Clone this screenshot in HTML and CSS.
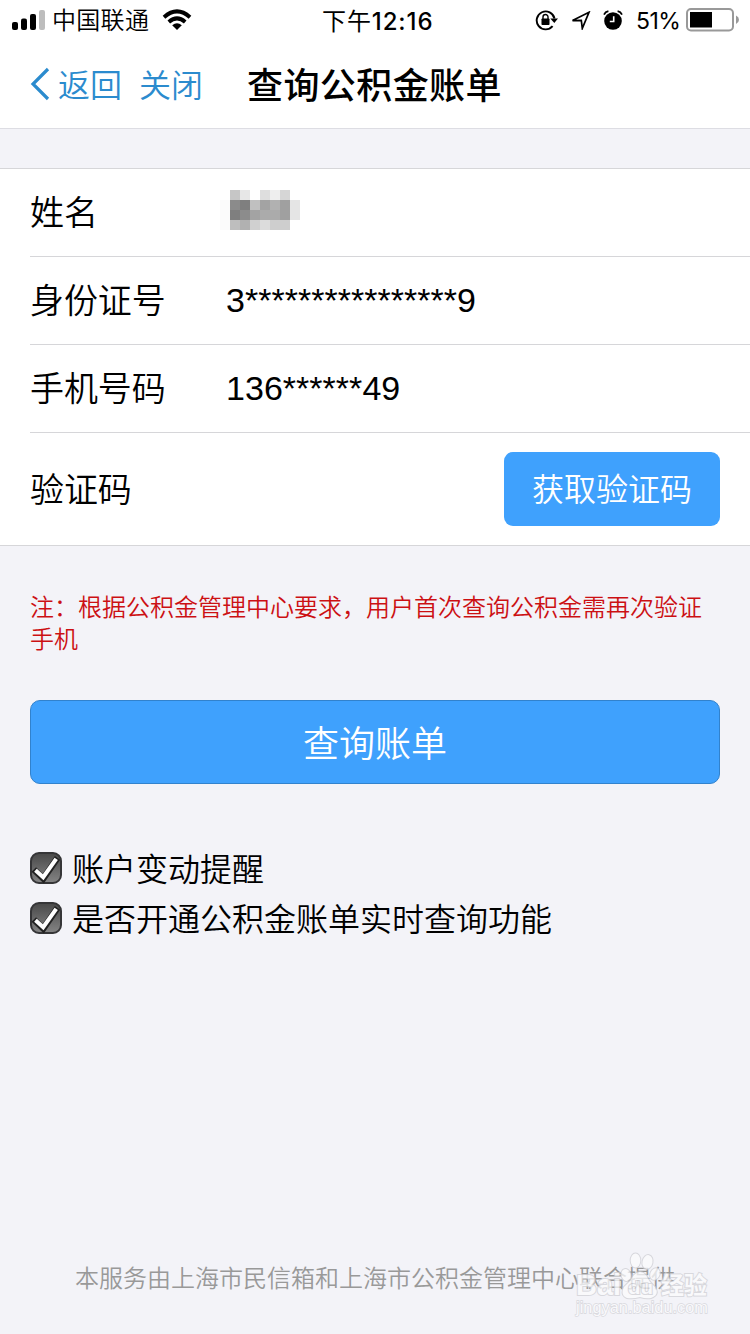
FILE: index.html
```
<!DOCTYPE html>
<html lang="zh-CN">
<head>
<meta charset="utf-8">
<title>查询公积金账单</title>
<link rel="stylesheet" href="styles.css">
</head>
<body>
<div class="page">
  <header class="status">
    <div class="status-left">
      <svg class="signal" width="34" height="22" viewBox="0 0 34 22"><rect x="0" y="13" width="6" height="8" rx="2"/><rect x="9" y="9.500" width="6" height="11.500" rx="2"/><rect x="18" y="5" width="6" height="16" rx="2"/><rect x="27" y="1" width="6" height="20" rx="2" fill="#bdbdbd"/></svg>
      <span class="carrier">中国联通</span>
      <svg class="wifi" width="30" height="22" viewBox="0 0 30 22"><path d="M2 8.200Q15-3.400 28 8.200M6.800 13Q15 5.800 23.200 13" fill="none" stroke="#000" stroke-width="3.900"/><path d="M10.200 16.200Q15 12.400 19.800 16.200L15 21Z"/></svg>
    </div>
    <div class="clock"><span class="clock-cn">下午</span>12:16</div>
    <div class="status-right">
      <svg class="lock" width="24" height="22" viewBox="0 0 24 22"><path d="M17.600 17.200A9 9 0 1 1 19.500 9.500" fill="none" stroke="#000" stroke-width="1.900"/><path d="M15.300 9.500H23L19.300 14Z"/><rect x="6.500" y="9.500" width="8" height="6.500" rx=".8"/><path d="M8 10V8a2.500 2.500 0 0 1 5 0v2" fill="none" stroke="#000" stroke-width="1.400"/></svg>
      <svg class="arrow" width="20" height="19" viewBox="0 0 20 19"><path d="M1.500 9.600L18 1.300L11.300 17.400L10.300 9.300Z" fill="none" stroke="#000" stroke-width="1.700" stroke-linejoin="miter"/></svg>
      <svg class="alarm" width="20" height="20" viewBox="0 0 20 20"><circle cx="10" cy="11" r="8.800"/><path d="M1 4.600Q2.300 1.800 5.400 1.200M14.600 1.200Q17.700 1.800 19 4.600" fill="none" stroke="#000" stroke-width="1.800"/><path d="M10.700 6.200V11.500H6.800" fill="none" stroke="#fff" stroke-width="1.600"/></svg>
      <span class="percent">51%</span>
      <svg class="battery" width="54" height="24" viewBox="0 0 54 24"><rect x="1" y="1" width="46" height="21.500" rx="4" fill="#fff" stroke="#999" stroke-width="2"/><rect x="4" y="4" width="22" height="15.500"/><path d="M50 7.500Q53 9 53 11.800T50 16Z" fill="#999"/></svg>
    </div>
  </header>
  <nav class="nav">
    <svg class="back" width="20" height="34" viewBox="0 0 20 34"><path d="M18 2L3 17L18 32" fill="none" stroke="#2b8bce" stroke-width="3.200"/></svg>
    <a class="nav-link">返回</a>
    <a class="nav-link close">关闭</a>
    <h1 class="title">查询公积金账单</h1>
  </nav>
  <section class="form">
    <div class="row"><span class="label">姓名</span>
      <svg class="mosaic" width="80" height="40" viewBox="0 0 8 4" shape-rendering="crispEdges"><path fill="#fbfbfb" d="M0 1h1v3H0z"/><path fill="#c6c6c6" d="M1 0h1v1H1z"/><path fill="#e7e7e7" d="M2 0h1v1H2z"/><path fill="#dedede" d="M4 0h1v1H4z"/><path fill="#eee" d="M5 0h1v1H5z"/><path fill="#d6d6d6" d="M6 0h1v1H6z"/><path fill="#8b8b8b" d="M1 1h1v1H1z"/><path fill="#7f7f7f" d="M2 1h1v1H2zM1 2h1v1H1z"/><path fill="#c0c0c0" d="M3 1h1v1H3z"/><path fill="#a3a3a3" d="M4 1h1v1H4zM3 2h1v1H3z"/><path fill="#b1b1b1" d="M5 1h1v1H5zM2 3h1v1H2z"/><path fill="#a0a0a0" d="M6 1h1v2H6z"/><path fill="#e5e5e5" d="M7 1h1v2H7z"/><path fill="#8c8c8c" d="M2 2h1v1H2z"/><path fill="#ababab" d="M4 2h2v1H4z"/><path fill="#bebebe" d="M1 3h1v1H1z"/><path fill="#d0d0d0" d="M3 3h1v1H3z"/><path fill="#dcdcdc" d="M4 3h1v1H4z"/><path fill="#cecece" d="M5 3h2v1H5z"/></svg>
    </div>
    <div class="row"><span class="label">身份证号</span><span class="value">3****************9</span></div>
    <div class="row"><span class="label">手机号码</span><span class="value">136******49</span></div>
    <div class="row code"><span class="label">验证码</span><button class="get-code">获取验证码</button></div>
  </section>
  <p class="note">注：根据公积金管理中心要求，用户首次查询公积金需再次验证手机</p>
  <button class="submit">查询账单</button>
  <div class="options">
    <div class="option"><svg class="check" width="32" height="32" viewBox="0 0 32 32"><defs><linearGradient id="box" x2="0" y2="1"><stop stop-color="#484848"/><stop offset="1" stop-color="#858585"/></linearGradient></defs><rect x="1" y="1" width="30" height="30" rx="8" fill="url(#box)" stroke="#353537" stroke-width="2"/><path d="M3.800 17.500L13.300 26.500L27.500 5.800" fill="none" stroke="#222" stroke-width="6.500"/><path d="M5.500 18.200L13.200 25.200L26.200 6.800" fill="none" stroke="#fff" stroke-width="4"/></svg><span>账户变动提醒</span></div>
    <div class="option"><svg class="check" width="32" height="32" viewBox="0 0 32 32"><rect x="1" y="1" width="30" height="30" rx="8" fill="url(#box)" stroke="#353537" stroke-width="2"/><path d="M3.800 17.500L13.300 26.500L27.500 5.800" fill="none" stroke="#222" stroke-width="6.500"/><path d="M5.500 18.200L13.200 25.200L26.200 6.800" fill="none" stroke="#fff" stroke-width="4"/></svg><span>是否开通公积金账单实时查询功能</span></div>
  </div>
  <footer class="footer">本服务由上海市民信箱和上海市公积金管理中心联合提供</footer>
  <svg class="watermark" width="150" height="70" viewBox="0 0 150 70">
    <g class="mark">
      <text x="6" y="47" font-size="29" textLength="45" lengthAdjust="spacingAndGlyphs">Bai</text>
      <text x="91" y="46" font-size="24" textLength="46" lengthAdjust="spacingAndGlyphs">经验</text>
      <ellipse cx="56" cy="27" rx="4.500" ry="6" transform="rotate(-15 56 27)"/><ellipse cx="65.500" cy="12.500" rx="4.800" ry="7"/><ellipse cx="77.500" cy="14" rx="5" ry="7" transform="rotate(12 77.500 14)"/><ellipse cx="85" cy="26" rx="4.500" ry="6" transform="rotate(25 85 26)"/>
      <path d="M54 39Q60 34 64 27Q70 21 76 27Q79 34 85 39Q90 47 81 50Q76 51 70 49Q63 51 57 50Q50 47 54 39Z"/>
      <text x="58" y="46" font-size="19" textLength="25" lengthAdjust="spacingAndGlyphs">du</text>
    </g>
    <text class="site" x="6" y="65" font-size="17" textLength="132" lengthAdjust="spacingAndGlyphs">jingyan.baidu.com</text>
  </svg>
</div>
</body>
</html>
```
FILE: styles.css
```
* { box-sizing: border-box; }
body { margin: 0; background: #f3f3f8; color: #000; font-family: "Liberation Sans", "Noto Sans CJK SC", sans-serif; }
.page { position: relative; width: 750px; height: 1334px; overflow: hidden; background: #f3f3f8; display: flex; flex-direction: column; font-weight: 350; }
svg { display: block; flex: none; }
h1, p { margin: 0; }
button { font-family: "Noto Sans CJK SC", sans-serif; color: #fff; background: #3fa1fd; border: 0; padding: 0 0 4px; font-weight: 350; }

.status { height: 40px; flex: none; background: #fff; display: grid; grid-template-columns: 322px 1fr auto; font-size: 24px; line-height: 40px; }
.status-left, .status-right { display: flex; align-items: center; height: 40px; }
.status-left { padding-left: 12px; }
.signal { margin-right: 6px; }
.carrier { width: 98px; padding-top: 2px; letter-spacing: .3px; }
.wifi { margin-left: 12px; }
.clock { font-family: Inter, "Noto Sans CJK SC", sans-serif; font-weight: 500; font-size: 24px; white-space: nowrap; letter-spacing: .9px; }
.clock-cn { font-family: "Noto Sans CJK SC", sans-serif; font-weight: 400; }
.status-right { padding-right: 10px; }
.arrow { margin-left: 12px; }
.alarm { margin-left: 12px; }
.percent { margin-left: 13px; width: 45px; padding-top: 2px; font-family: Inter, sans-serif; font-weight: 400; font-size: 23px; letter-spacing: -0.6px; margin-right: 5px; }

.nav { height: 89px; flex: none; background: #fff; border-bottom: 1px solid #dddde3; display: flex; align-items: center; padding-left: 30px; font-family: "Noto Sans CJK SC", sans-serif; }
.nav-link { font-size: 32px; color: #2b8bce; line-height: 48px; margin-left: 8px; padding-bottom: 3px; }
.nav-link.close { margin-left: 17px; }
.title { font-size: 36px; font-weight: 500; line-height: 54px; margin-left: 44px; padding-bottom: 3px; letter-spacing: .4px; }

.form { margin-top: 39px; flex: none; background: #fff; border-top: 1px solid #d6d6d9; border-bottom: 1px solid #d6d6d9; padding-left: 30px; }
.row { height: 88px; display: flex; align-items: center; border-bottom: 1px solid #d6d6d9; }
.label { width: 196px; font-family: "Noto Sans CJK SC", sans-serif; font-size: 34px; line-height: 50px; padding-bottom: 3px; letter-spacing: -.1px; }
.value { font-size: 34px; line-height: 50px; padding-bottom: 2px; letter-spacing: .03px; }
.mosaic { margin-left: -6px; margin-top: -6px; }
.row.code { height: 112px; border-bottom: 0; justify-content: space-between; padding-right: 30px; }
.get-code { width: 216px; height: 74px; border-radius: 9px; font-size: 32px; line-height: 70px; }

.note { margin: 44px 30px 0; flex: none; height: 64px; font-family: "Noto Sans CJK SC", sans-serif; font-size: 24px; line-height: 32px; color: #cc1013; word-break: break-all; }
.submit { margin: 46px 30px 0; flex: none; height: 84px; border: 1px solid #3182cd; border-radius: 10px; font-size: 36px; line-height: 78px; padding-bottom: 3px; }
.options { margin-top: 59px; padding-left: 30px; font-family: "Noto Sans CJK SC", sans-serif; font-size: 32px; }
.option { height: 50px; display: flex; align-items: center; gap: 10px; line-height: 48px; }
.option span { padding-bottom: 3px; }
.footer { margin-top: auto; padding-bottom: 39px; text-align: center; font-family: "Noto Sans CJK SC", sans-serif; font-size: 24px; line-height: 36px; color: #999; font-weight: 350; }
.watermark { position: absolute; left: 570px; top: 1248px; font-family: "Liberation Sans", "Noto Sans CJK SC", sans-serif; opacity: .75; }
.mark { font-weight: 700; fill: #fbfbfd; stroke: #cfcfd4; stroke-width: 2; paint-order: stroke; }
.site { fill: #fbfbfd; stroke: #cfcfd4; stroke-width: 1.400; paint-order: stroke; }
```
